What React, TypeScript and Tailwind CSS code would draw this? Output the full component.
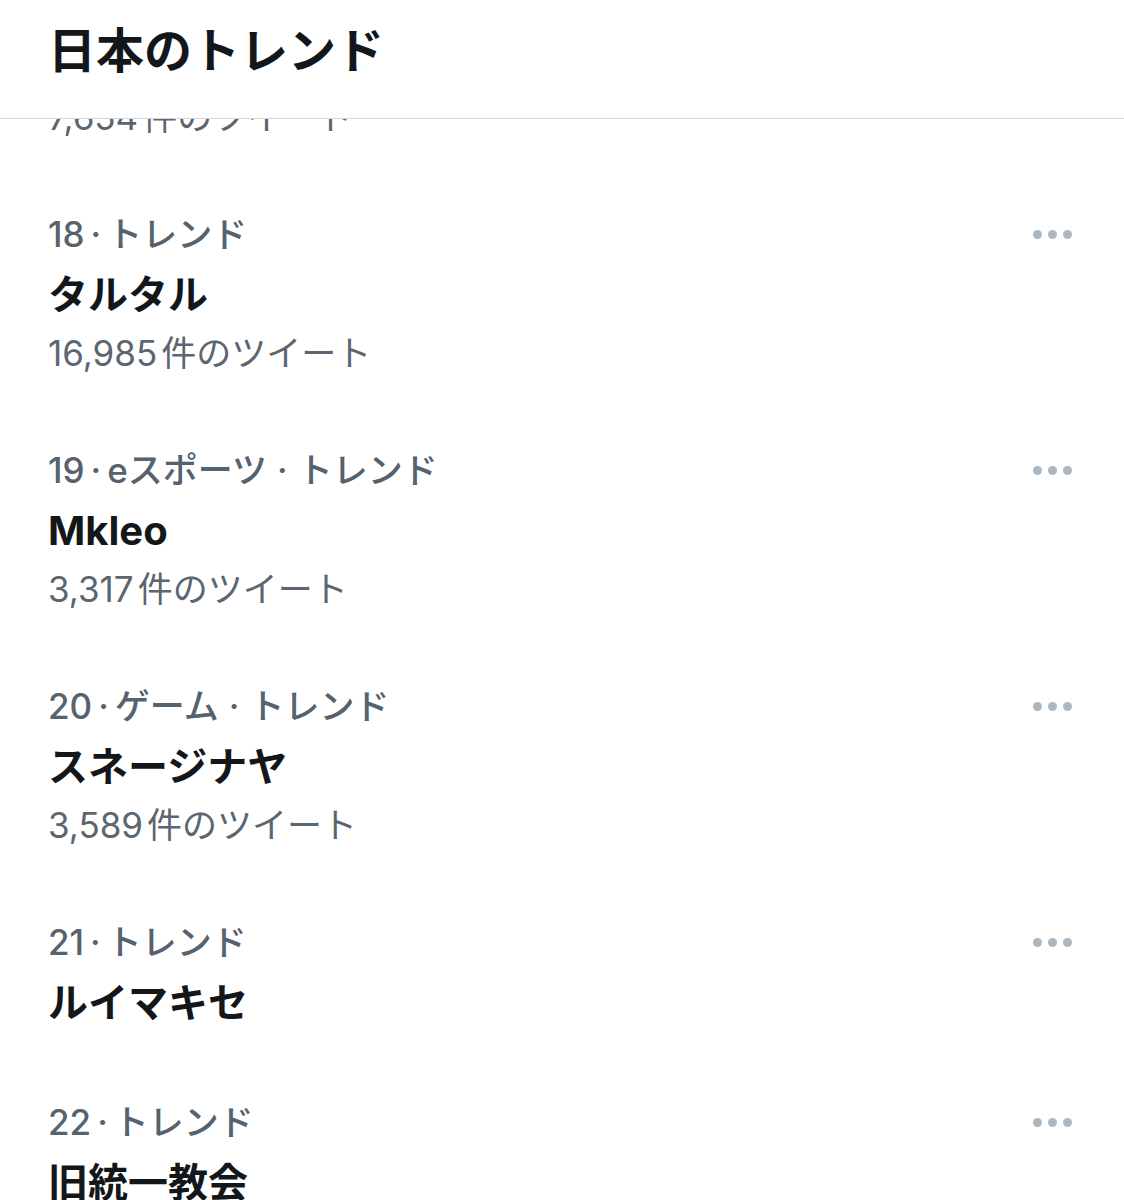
import { Fragment } from "react";

type Trend = {
  rank: number;
  category?: string;
  name: string;
  tweets?: string;
};

const trends: Trend[] = [
  { rank: 18, name: "タルタル", tweets: "16,985" },
  { rank: 19, category: "eスポーツ", name: "Mkleo", tweets: "3,317" },
  { rank: 20, category: "ゲーム", name: "スネージナヤ", tweets: "3,589" },
  { rank: 21, name: "ルイマキセ" },
  { rank: 22, name: "旧統一教会", tweets: "4,102" },
];

const font = "font-['Inter','Noto_Sans_CJK_JP',sans-serif]";

const MoreDots = () => (
  <div className="flex items-center gap-[6px]">
    <span className="h-[9px] w-[9px] rounded-full bg-[#adb7c0]" />
    <span className="h-[9px] w-[9px] rounded-full bg-[#adb7c0]" />
    <span className="h-[9px] w-[9px] rounded-full bg-[#adb7c0]" />
  </div>
);

const TrendItem = ({ trend }: { trend: Trend }) => {
  return (
    <div className="flex flex-col pl-[48px] pr-[52px] py-[29px]">
      <div className="flex items-center justify-between">
        <p className="text-[35px] leading-[62px] font-medium text-[#56626d]">
          {trend.rank}
          <span className="mx-[6px]">·</span>
          {trend.category && (
            <Fragment>
              {trend.category}
              <span className="mx-[10px]">·</span>
            </Fragment>
          )}
          トレンド
        </p>
        <MoreDots />
      </div>
      <p className="text-[40px] leading-[60px] font-bold text-[#14171a]">{trend.name}</p>
      {trend.tweets && (
        <p className="text-[35px] leading-[56px] text-[#5b6670]">
          {trend.tweets}
          <span className="ml-[4px]">件のツイート</span>
        </p>
      )}
    </div>
  );
};

export default function App() {
  return (
    <div className={`h-[1200px] w-full overflow-hidden bg-white ${font}`}>
      <header className="h-[119px] border-b border-[#d6d6d6] pl-[48px] pt-[21px]">
        <h1 className="text-[48px] leading-[60px] font-bold text-[#14171a]">日本のトレンド</h1>
      </header>
      <div className="mb-[29px] h-[26px] overflow-hidden pl-[48px]">
        <p className="-mt-[30px] text-[35px] leading-[56px] text-[#5b6670]">
          7,654<span className="ml-[4px]">件のツイート</span>
        </p>
      </div>
      <div className="flex flex-col">
        {trends.map((t) => (
          <TrendItem key={t.rank} trend={t} />
        ))}
      </div>
    </div>
  );
}
